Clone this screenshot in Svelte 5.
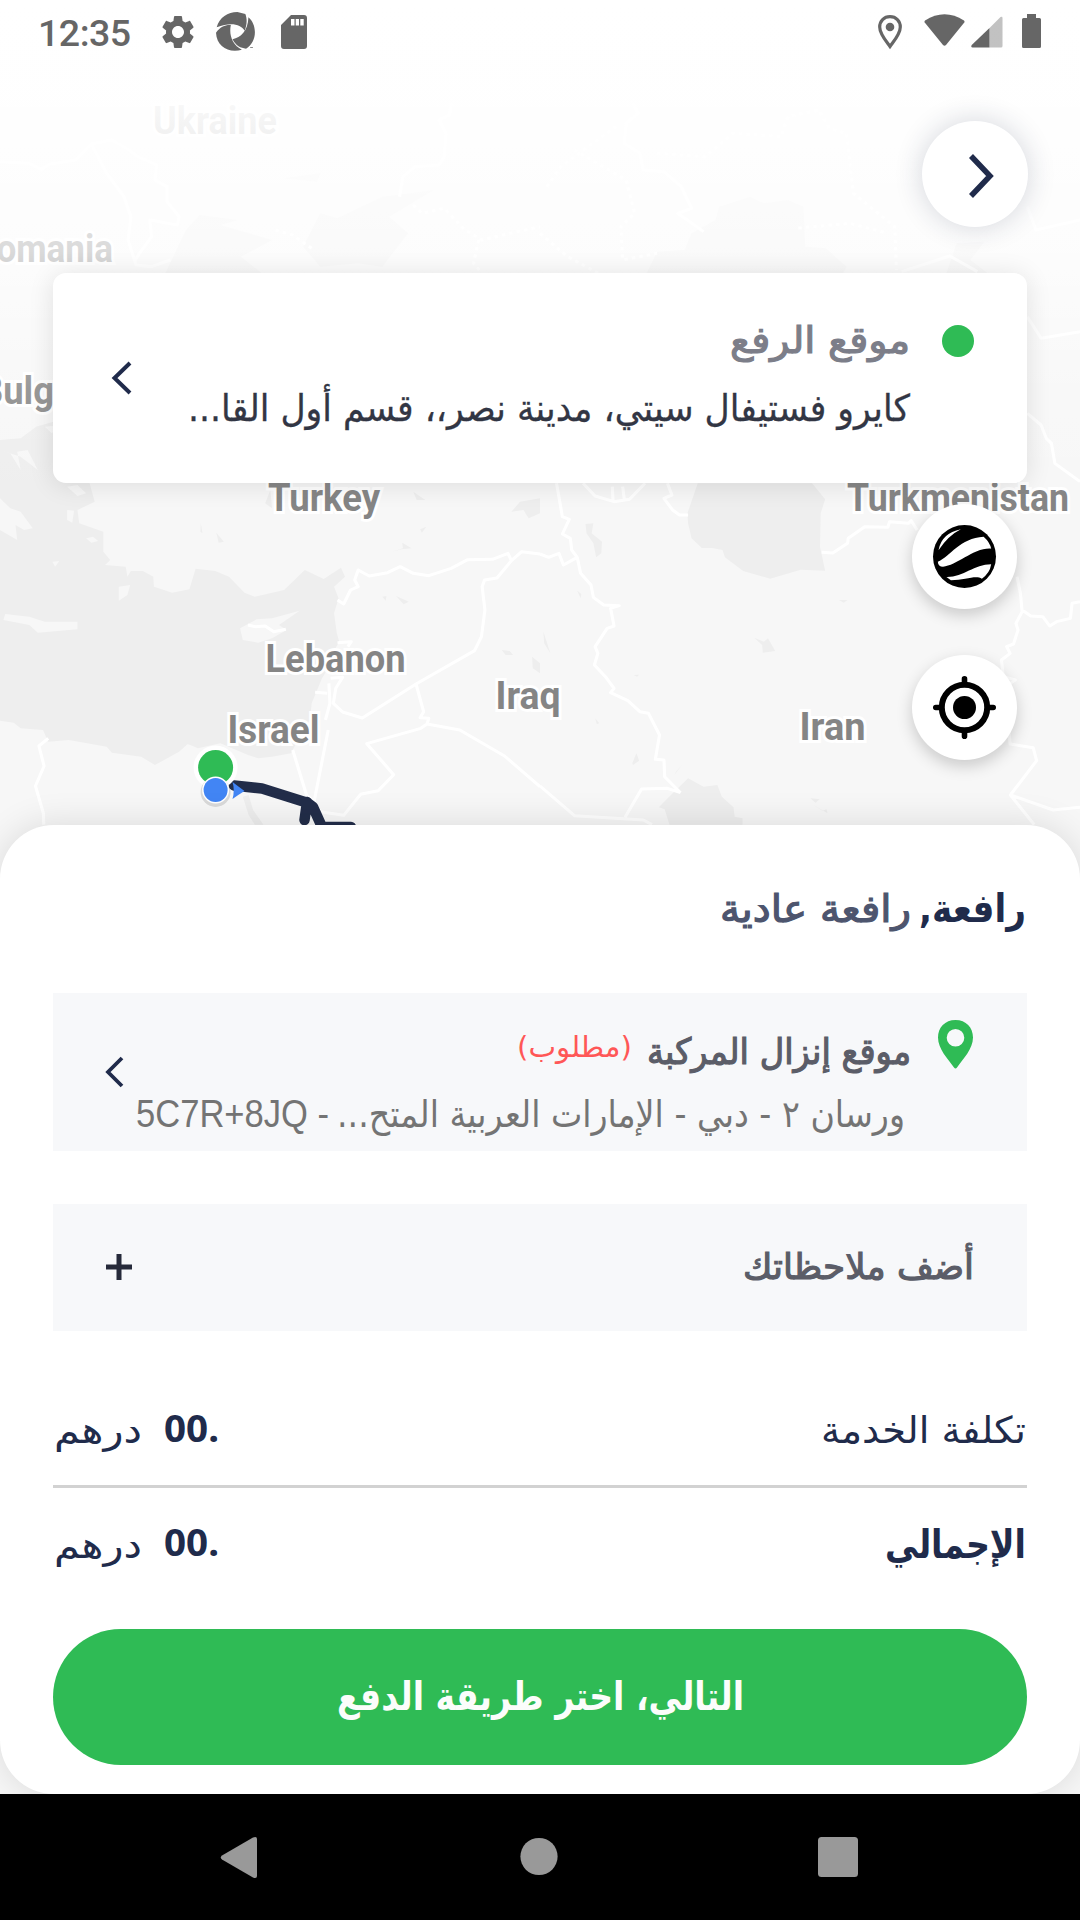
<script>
  const places = [
    { name: 'Ukraine', x: 153, y: 134, w: 124 },
    { name: 'Romania', x: -26, y: 262, w: 139 },
    { name: 'Bulgaria', x: -20, y: 404, w: 136 },
    { name: 'Turkey', x: 268, y: 511, w: 112 },
    { name: 'Turkmenistan', x: 847, y: 511, w: 222 },
    { name: 'Lebanon', x: 265.5, y: 672, w: 140 },
    { name: 'Iraq', x: 495.5, y: 709, w: 65 },
    { name: 'Israel', x: 227.5, y: 743, w: 92 },
    { name: 'Iran', x: 799.5, y: 740, w: 66 }
  ];
  const costs = [
    { title: 'تكلفة الخدمة', w: 205, total: false },
    { title: 'الإجمالي', w: 141, total: true }
  ];
</script>

{#snippet label(text, width, kind)}
  <svg class="label {kind}" {width} height="48" direction="rtl">
    <text x={width} y="36" textLength={width} lengthAdjust="spacingAndGlyphs">{text}</text>
  </svg>
{/snippet}

{#snippet latin(text, width, kind)}
  <svg class="label {kind}" {width} height="48">
    <text x="0" y="36" textLength={width} lengthAdjust="spacingAndGlyphs">{text}</text>
  </svg>
{/snippet}

<div class="screen">
  <svg class="map" width="1080" height="1794" viewBox="0 0 1080 1794">
    <defs>
      <linearGradient id="fade" x1="0" y1="0" x2="0" y2="1">
        <stop offset="0" stop-color="#fff" />
        <stop offset="0.2" stop-color="#fff" stop-opacity=".95" />
        <stop offset="0.5" stop-color="#fff" stop-opacity=".7" />
        <stop offset="0.78" stop-color="#fff" stop-opacity=".16" />
        <stop offset="1" stop-color="#fff" stop-opacity="0" />
      </linearGradient>
    </defs>
    <rect width="1080" height="1794" fill="#f7f7f7" />
    <g transform="scale(.34439 .33333)">
      <path class="sea" d="M480 820L540 690 580 645 690 660 640 675 790 720 700 770 760 820ZM930 640L980 655 1110 590 1260 570 1130 650 1185 700 1110 800 1040 790 930 800 880 740ZM825 535L930 520 920 545Z" />
      <path class="border" d="M0 485L85 490 120 508 145 492 220 480 265 432 325 420 375 450 400 470 455 495 450 540 485 560 485 605 520 650 515 675 435 660 440 710 405 760 390 785M265 432L310 520 360 590 380 650 372 720 395 795 440 800 495 780M1310 310L1305 345 1275 360 1295 400 1290 470 1275 495 1205 500 1170 530 1160 590" />
      <path class="border dots" d="M1200 615L1225 640 1290 625 1350 690 1400 720 1480 700 1568 680M1390 720L1375 790 1400 820M800 690L850 705 905 745" />
    </g>
    <g transform="translate(540 0) scale(.34439 .33333)">
      <path class="sea" d="M310 820L340 755 420 750 440 700 510 660 520 620 610 590 650 610 720 600 765 620 770 740 830 745 890 800 880 820ZM1180 820L1210 730 1290 725 1250 780 1300 820Z" />
      <path class="border" d="M270 310L285 340 250 370 245 430 290 460 300 510 360 515 410 560 440 625 400 640 475 695M1050 815L1190 768 1270 815M1415 620L1440 690 1568 660" />
      <path class="border dots" d="M20 560L60 500 220 380M100 450L250 540 275 640 235 680 240 780 340 760M340 460L480 470 560 400 700 410 720 350 810 330 840 385 890 400 910 580 1030 680 1035 810M750 684L900 670 1010 700M0 700L80 770 170 820" />
    </g>
    <g transform="translate(0 470) scale(.34439 .33333)">
      <path class="sea" d="M0-90L60-95 105-130 155-145 200 20 260 40 275 95 225 120 230 160 300 185 300 245 320 270 305 285 365 290 370 320 380 303 415 303 445 320 447 350 500 368 550 358 568 296 625 303 665 320 710 368 740 380 825 360 885 300 940 327 990 293 1002 320 970 350 983 385 970 430 978 490 985 515 960 560 950 600 935 625 905 700 900 750 870 800 845 850 790 860 750 865 720 855 640 820 575 835 545 822 520 845 450 885 410 860 325 848 310 830 200 810 140 815 125 780 60 775 40 758 0 752Z" />
      <path class="land" d="M0 -60L30-50 60 0 50-55 80-60 110 0 60-40ZM0 85L30 115 60 125 95 175 70 180 45 165 50 210 0 180ZM15 432L85 440 130 455 225 455 225 478 110 488 85 465 10 450ZM697 475L745 448 790 445 870 422 810 465 832 480 790 505 750 518 705 510ZM345 350L378 345 370 375 345 392ZM195 50L225 45 250 70 225 78ZM250 205L270 200 285 213 265 218ZM195 120L215 122 210 158 195 150ZM152 275L172 273 160 290ZM130-130L180-135 150-110Z" />
      <path class="sea" d="M583 160L588 190 582 185ZM628 188L650 215 635 218ZM1485 125L1510 95 1568 85 1568 130 1535 145 1520 120ZM1200 65L1235 90 1210 90ZM1138 245L1170 235 1168 218 1195 235 1165 238ZM1150 378L1187 395 1172 403ZM1110 380L1122 378 1120 392ZM1457 540L1480 543 1490 555 1468 555ZM705 980L722 975 735 1020 765 1064 740 1064 722 1035ZM1545 560L1568 580 1568 610 1547 595ZM1220 178L1238 170 1225 188ZM770 100L785 60 790 115Z" />
      <path class="border" d="M980 390L998 402 1018 360 1040 350 1030 330 1040 300 1072 318 1125 308 1162 290 1200 310 1245 317 1310 295 1358 269 1430 268 1475 250 1485 272 1515 245 1568 252M1485 272L1443 324 1407 330 1400 350 1408 420 1398 500 1378 542 1208 642 1052 744 995 726 968 700 975 655 995 622 960 625M1208 642L1230 725 1220 743 1245 745 1240 762 1335 780 1465 858 1568 950M1240 762L1222 775 1065 821 1143 914 1098 962 1047 973 998 1036 930 1025 912 995 953 780M850 840L890 975 912 995M955 640L958 700 945 750M915 667L950 670M980 518L1020 515 1010 530M140 805L113 828 128 888 103 948 126 1030 127 1064M720 465L740 470 770 468 795 485 830 478" />
    </g>
    <g transform="translate(540 470) scale(.34439 .33333)">
      <path class="sea" d="M458 40L790 40 828 88 815 130 813 230 828 302 757 299 668 326 590 303 537 262 530 240 500 234 470 234 440 205 430 160 428 130ZM345 1012L375 980 430 925 475 950 515 945 528 980 562 1012 565 1040 588 1045 588 1064 376 1064 362 1018ZM132 162L155 160 150 190 180 215 178 250 163 262 155 220 135 190ZM622 503L650 515 662 505 683 543 647 548 645 525ZM868 390L893 390 882 398ZM272 615L288 614 282 620ZM108 362L120 372 118 385ZM10 485L30 550 12 520ZM785 985L812 988 800 998ZM790 1003L820 1022 832 1018 835 1030ZM390 915L412 885 395 905ZM268 880L280 850 288 872 270 885ZM160 745L172 760 165 762Z" />
      <path class="border" d="M48 40L65 140 85 148 65 192 88 205 92 240 108 262 118 310 148 345 155 382 185 405 230 407 205 415 215 468 195 475 160 530 168 550 158 585 190 620 215 655 205 668 255 692 290 725 315 730 347 795 335 868 360 870 362 920 408 968M108 262L68 285 55 250 25 262 0 252M408 968L370 955 295 957 247 1042M0 948L100 1037 300 1050 325 1064M125 40L160 78 215 95 260 88 305 40M210 50L212 92M240 50L245 90M370 40L383 75 360 85 385 120 405 135 430 135M818 247L850 249 893 220 895 205 943 170 1010 172 1015 155 1070 160 1078 152 1095 180M1385 320L1395 370 1400 425 1382 460 1388 480 1375 522 1355 530 1365 550 1340 570 1345 620 1380 630 1350 650 1365 822 1432 833 1442 872 1366 975 1435 1064M1366 975L1490 1020 1568 1012M1400 420L1425 438 1460 440 1480 468 1500 455 1540 445 1545 400 1568 395M1415-170L1455-135 1470-95 1485-80 1495-20 1568 35M1415-460L1455-395 1568-415" />
    </g>
    {#each places as p}
      <text class="place" x={p.x} y={p.y} textLength={p.w} lengthAdjust="spacingAndGlyphs">{p.name}</text>
    {/each}
    <path class="route" d="M234 785.500L262 788.500 308 803M307 802L304.500 820M309 804L313 807 322 827H351" />
    <circle cx="215.600" cy="767.500" r="22" fill="#fff" />
    <circle cx="215.600" cy="767.500" r="17.500" fill="#2fbb55" />
    <circle cx="215.600" cy="792" r="15" fill="#000" opacity=".12" />
    <circle cx="215.600" cy="790" r="13.500" fill="#fff" />
    <circle cx="215.600" cy="790" r="12" fill="#4285f4" />
    <path d="M232.500 782Q239 787 244.500 791 238 795 232.500 799 235 790 232.500 782Z" fill="#4285f4" />
    <rect width="1080" height="500" fill="url(#fade)" />
  </svg>

  <header class="status">
    <span class="clock">12:35</span>
    <svg class="gear" width="40" height="40" viewBox="0 0 24 24"><path d="M19.14 12.940c.04-.3.060-.610.060-.940 0-.320-.020-.640-.070-.940l2.030-1.580c.180-.140.230-.410.120-.610l-1.920-3.320c-.120-.220-.370-.290-.590-.220l-2.390.960c-.5-.380-1.030-.7-1.620-.940l-.360-2.540c-.040-.240-.240-.410-.480-.410h-3.840c-.240 0-.430.170-.470.410l-.360 2.540c-.590.240-1.130.570-1.620.940l-2.390-.960c-.220-.080-.470 0-.590.220L2.740 8.870c-.120.210-.080.470.120.610l2.030 1.580c-.050.3-.090.630-.090.940s.020.640.070.940l-2.030 1.580c-.180.140-.230.410-.120.610l1.920 3.320c.120.220.370.290.590.220l2.390-.960c.5.380 1.030.7 1.620.940l.360 2.540c.050.240.240.410.480.410h3.840c.240 0 .440-.170.470-.410l.360-2.540c.590-.240 1.130-.560 1.620-.940l2.390.960c.220.080.470 0 .590-.220l1.920-3.320c.120-.220.070-.470-.120-.610l-2.010-1.580zM12 15.600c-1.980 0-3.600-1.620-3.600-3.600s1.620-3.600 3.600-3.600 3.600 1.620 3.600 3.600-1.620 3.600-3.600 3.600z" /></svg>
    <svg class="swirl" width="39" height="39" viewBox="628 36 113 117" preserveAspectRatio="none"><path d="M630 82C638 52 662 36 690 36L713 42C720 60 716 80 711 92 700 72 670 65 630 82ZM722 52C748 75 748 125 715 146 700 145 685 137 676 118 700 112 720 95 722 52ZM628 98C640 80 655 74 671 75 665 105 675 135 703 149 665 160 630 140 628 98ZM727 141H735V143H727Z" /></svg>
    <svg class="sd" width="26" height="34" viewBox="0 0 26 34"><path fill-rule="evenodd" d="M10 0H23Q26 0 26 3V31Q26 34 23 34H3Q0 34 0 31V10ZM10 4V10.500H13.500V4ZM14.700 4V10.500H18V4ZM19.300 4V10.500H22.700V4Z" /></svg>
    <svg class="gps" width="24" height="34" viewBox="0 0 24 34"><path d="M12 1.700C6 1.700 1.700 6 1.700 12 1.700 19 8 26 12 31.500 16 26 22.300 19 22.300 12 22.300 6 18 1.700 12 1.700Z" fill="none" stroke="#666" stroke-width="3.200" /><circle cx="12" cy="12" r="4.300" /></svg>
    <svg class="wifi" width="41" height="32" viewBox="0 0 41 32"><path d="M1 6.500Q20.500-6 40 6.500 41 7.500 40.300 8.500L22 31Q20.500 32.500 19 31L.7 8.500Q0 7.500 1 6.500Z" /></svg>
    <svg class="signal" width="32" height="32" viewBox="0 0 32 32"><path opacity=".4" d="M18.500 12L29.500 1Q31.500 0 31.500 2V30Q31.500 31.500 30 31.500H18.500Z" /><path d="M18.500 12V31.500H1.500Q-.5 31 .7 29Z" /></svg>
    <svg class="battery" width="19" height="34" viewBox="0 0 19 34"><path d="M5 0H14V4H17.500Q19 4 19 5.500V32.500Q19 34 17.500 34H1.500Q0 34 0 32.500V5.500Q0 4 1.500 4H5Z" /></svg>
  </header>

  <button class="back" aria-label="رجوع">
    <svg width="30" height="44" viewBox="0 0 30 44"><path d="M3 2L22 22 3 42" fill="none" stroke="#202b4b" stroke-width="5.500" /></svg>
  </button>

  <section class="pickup">
    <svg class="chev" width="22" height="34" viewBox="0 0 22 34"><path d="M19 2L3.500 17 19 32" fill="none" stroke="#202b4b" stroke-width="4" /></svg>
    <div class="lines">
      {@render label('موقع الرفع', 180, 'soft')}
      {@render label('كايرو فستيفال سيتي، مدينة نصر،، قسم أول القا...', 722, 'dark')}
    </div>
    <i class="dot"></i>
  </section>

  <div class="tools">
    <button aria-label="نوع الخريطة">
      <svg width="63" height="63" viewBox="1141 165 183 189" preserveAspectRatio="none"><ellipse cx="1232.500" cy="259.500" rx="91.500" ry="94.500" /><path fill="#fff" d="M1157 241Q1166 189 1222 178 1186 196 1157 241ZM1155 275C1190 260 1220 203 1288 200Q1306 216 1310 236C1260 232 1210 288 1170 290Q1156 290 1155 275ZM1180 321C1230 322 1260 283 1310 283Q1306 310 1283 326C1265 315 1235 330 1193 331Z" /></svg>
    </button>
    <button aria-label="موقعي">
      <svg width="63" height="63" viewBox="0 0 63 63"><circle cx="31.500" cy="31.500" r="22.700" fill="none" stroke="#000" stroke-width="6" /><circle cx="31.500" cy="31.500" r="11.500" /><path d="M31.500 2.800V8M31.500 55V60.200M2.800 31.500H8M55 31.500H60.200" stroke="#000" stroke-width="5.600" stroke-linecap="round" /></svg>
    </button>
  </div>

  <main class="sheet">
    <div class="title">
      {@render label('رافعة عادية', 191, 'slate')}
      {@render label('رافعة,', 107, 'strong')}
    </div>

    <section class="dropoff">
      <svg class="chev" width="20" height="32" viewBox="0 0 20 32"><path d="M17 2L3 16 17 30" fill="none" stroke="#202b4b" stroke-width="3.800" /></svg>
      <div class="lines">
        <div class="heading">
          {@render label('(مطلوب)', 115, 'required')}
          {@render label('موقع إنزال المركبة', 264, 'medium')}
        </div>
        <div class="address">
          {@render latin('5C7R+8JQ -', 193, 'code')}
          {@render label('ورسان ٢ - دبي - الإمارات العربية المتح...', 568, 'grey')}
        </div>
      </div>
      <svg class="pin" width="35" height="49" viewBox="0 0 35 49"><path fill="#2fbb55" fill-rule="evenodd" d="M17.500 0C7 0 0 7.500 0 17.500 0 29 10 39 16 47.500Q17.500 49.500 19 47.500C25 39 35 29 35 17.500 35 7.500 28 0 17.500 0ZM17.500 9A8.800 8.800 0 1 1 17.500 26.600 8.800 8.800 0 1 1 17.500 9Z" /></svg>
    </section>

    <section class="notes">
      <svg class="plus" width="26" height="26" viewBox="0 0 26 26"><path d="M13 0V26M0 13H26" stroke="#262a3a" stroke-width="5" /></svg>
      {@render label('أضف ملاحظاتك', 231, 'medium')}
    </section>

    <div class="costs">
      {#each costs as c}
        <div class="cost" class:total={c.total}>
          {@render label('درهم', 88, 'navy')}
          {@render latin('00.', 55, 'amount')}
          <span class="gap"></span>
          {@render label(c.title, c.w, c.total ? 'strong' : 'navy')}
        </div>
      {/each}
    </div>

    <button class="next">{@render label('التالي، اختر طريقة الدفع', 407, 'cta')}</button>
  </main>

  <nav>
    <svg width="38" height="43" viewBox="0 0 38 43"><path d="M2 19.500L33 1.500Q37 0 37 3V40Q37 43 33 41.500L2 23.500Q-.5 21.500 2 19.500Z" /></svg>
    <svg width="38" height="38" viewBox="0 0 38 38"><circle cx="20" cy="18.500" r="18.600" /></svg>
    <svg width="40" height="40" viewBox="0 0 40 40"><rect width="40" height="40" rx="3.500" /></svg>
  </nav>
</div>

<style>
  :global(body) { margin: 0; background: #fff; }
  .screen {
    position: relative;
    width: 1080px;
    height: 1920px;
    overflow: hidden;
    display: flex;
    flex-direction: column;
    font-family: Roboto, 'DejaVu Sans', sans-serif;
  }
  svg { display: block; flex: none; overflow: visible; }
  button { border: 0; padding: 0; display: flex; align-items: center; justify-content: center; }
  .map { position: absolute; left: 0; top: 0; z-index: -1; overflow: hidden; }
  .sea { fill: #eee; }
  .land { fill: #f7f7f7; }
  .border { fill: none; stroke: #fff; stroke-width: 9; stroke-linejoin: round; }
  .dots { stroke-dasharray: 10 12; }
  .place {
    font: 700 38px Roboto, sans-serif;
    fill: #858585;
    stroke: #fff;
    stroke-width: 6px;
    paint-order: stroke;
  }
  .route { fill: none; stroke: #222d49; stroke-width: 10.5; stroke-linejoin: round; stroke-linecap: round; }

  .status {
    height: 60px;
    box-sizing: border-box;
    padding: 12px 39px 0 38px;
    display: flex;
    align-items: flex-start;
    fill: #666;
    color: #666;
  }
  .clock { width: 120px; font: 500 37.5px/42px Roboto, sans-serif; letter-spacing: -.5px; }
  .swirl { margin-left: 18px; }
  .sd { margin: 3px 0 0 26px; }
  .gps { margin: 3px 0 0 auto; }
  .wifi { margin: 2px 0 0 22px; }
  .signal { margin: 4px 0 0 6px; }
  .battery { margin: 2px 0 0 19px; }

  .back {
    width: 106px;
    height: 106px;
    margin: 61px 52px 0 auto;
    border-radius: 50%;
    background: #fff;
    box-shadow: 0 0 28px rgba(32, 43, 75, .19);
  }
  .back svg { margin: 4px 0 0 16px; }

  .pickup {
    height: 210px;
    box-sizing: border-box;
    margin: 46px 53px 0;
    padding: 0 53px 0 58px;
    display: flex;
    background: #fff;
    border-radius: 13px;
    box-shadow: 0 2px 26px rgba(0, 0, 0, .11);
  }
  .pickup .chev { margin-top: 88px; }
  .lines { display: flex; flex-direction: column; align-items: flex-end; }
  .pickup .lines { flex: 1; padding-top: 44px; gap: 20px; }
  .dot { width: 32px; height: 32px; margin: 52px 0 0 32px; border-radius: 50%; background: #2fbb55; }

  .tools {
    align-self: flex-end;
    margin: 21px 63px 0 0;
    display: flex;
    flex-direction: column;
    gap: 46px;
  }
  .tools button {
    width: 105px;
    height: 105px;
    border-radius: 50%;
    background: #fff;
    box-shadow: 0 6px 16px rgba(0, 0, 0, .19);
  }

  .sheet {
    height: 969px;
    box-sizing: border-box;
    margin-top: auto;
    padding: 61px 53px 0;
    border-radius: 54px;
    background: #fff;
    box-shadow: 0 0 36px rgba(0, 0, 0, .12);
  }
  .title { display: flex; justify-content: flex-end; gap: 8px; padding-right: 1px; }
  .dropoff {
    height: 158px;
    box-sizing: border-box;
    margin-top: 59px;
    padding: 0 54px 0 52px;
    display: flex;
    background: #f7f8fa;
  }
  .dropoff .chev { margin-top: 63px; }
  .dropoff .lines { flex: 1; padding-top: 35px; }
  .heading { display: flex; gap: 15px; }
  .required { margin-top: -7px; }
  .address { display: flex; gap: 8px; margin: 15px 6px 0 0; }
  .pin { margin: 27px 0 0 27px; }
  .notes {
    height: 127px;
    margin-top: 53px;
    padding: 0 53px;
    display: flex;
    align-items: center;
    justify-content: space-between;
    background: #f7f8fa;
  }
  .notes .label { margin-top: -2px; }
  .notes .plus { margin-top: -2px; }

  .cost { height: 78px; display: flex; padding: 0 1px; border-bottom: 3px solid #d2d2d2; }
  .costs { margin-top: 76px; }
  .cost .amount { margin: -1px 0 0 22px; }
  .gap { flex: 1; }
  .cost.total { height: 107px; padding-top: 34px; border: 0; }
  .cost.total .amount { margin-top: -2px; }

  .next { width: 974px; height: 136px; border-radius: 68px; background: #2fbb55; }
  .next .label { margin-top: 2px; }

  .label { overflow: visible; font-family: 'DejaVu Sans', sans-serif; font-size: 37px; }
  .soft { fill: #7c7e89; stroke: #7c7e89; stroke-width: 1.2px; }
  .dark { fill: #323644; stroke: #323644; stroke-width: .3px; }
  .slate { fill: #4d556e; stroke: #4d556e; stroke-width: 1.2px; font-size: 38px; }
  .strong { fill: #202b4b; font-weight: 700; font-size: 39px; }
  .required { fill: #ff5757; font-size: 29px; }
  .medium { fill: #5b5d68; stroke: #5b5d68; stroke-width: 1.2px; font-size: 36px; }
  .grey { fill: #747474; }
  .code { fill: #747474; font-family: 'Liberation Sans', sans-serif; font-size: 38px; }
  .navy { fill: #202b4b; }
  .amount { fill: #202b4b; font: 700 38px 'Noto Sans', sans-serif; }
  .cta { fill: #fbfdfb; font-weight: 700; font-size: 39px; }

  nav {
    height: 126px;
    box-sizing: border-box;
    padding: 0 222px 0 220px;
    display: flex;
    align-items: center;
    justify-content: space-between;
    background: #000;
    fill: #999;
    z-index: 1;
  }
</style>
